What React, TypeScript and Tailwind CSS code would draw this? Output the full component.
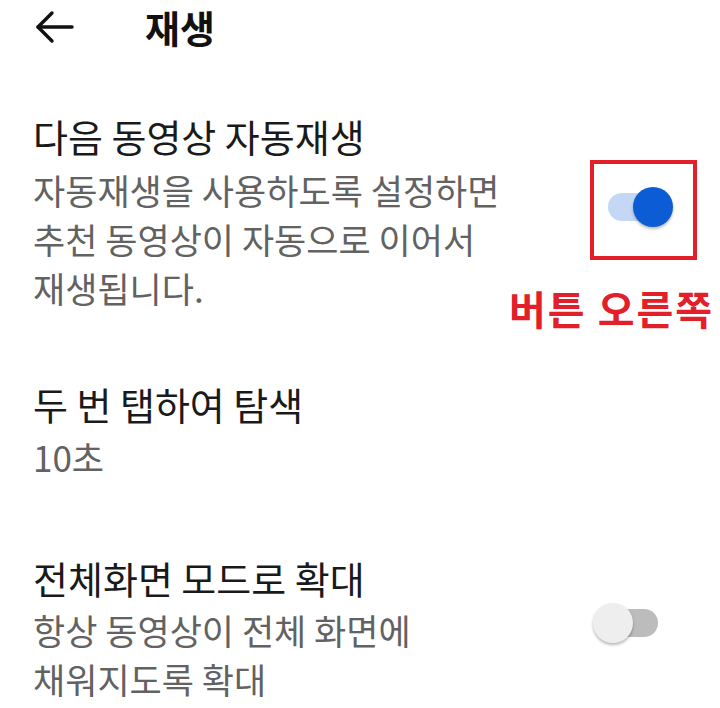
import React from 'react';

const font = { fontFamily: '"Noto Sans CJK KR", "Noto Sans", sans-serif' };

function Toggle({ on }: { on: boolean }) {
  return (
    <div className="relative w-[65px] h-[40px]">
      <div
        className={`absolute top-[6px] h-[28px] w-[55px] rounded-full ${
          on ? 'left-0 bg-[#c4d8f6]' : 'right-0 bg-[#bcbcbc]'
        }`}
      />
      <div
        className={`absolute top-0 h-[40px] w-[40px] rounded-full shadow-[0_2px_3px_rgba(0,0,0,0.28)] ${
          on ? 'right-0 bg-[#0b5cd5]' : 'left-0 bg-[#eeeeee]'
        }`}
      />
    </div>
  );
}

export default function App() {
  return (
    <div className="relative w-[720px] h-[708px] overflow-hidden bg-white" style={font}>
      {/* Header */}
      <div className="flex items-center h-[54px]">
        <svg
          className="ml-[35px]"
          width="40"
          height="34"
          viewBox="0 0 40 34"
          fill="none"
          stroke="#111"
          strokeWidth="3.4"
          strokeLinecap="round"
          strokeLinejoin="round"
        >
          <path d="M3 17H37" />
          <path d="M17 3L3 17L17 31" />
        </svg>
        <span className="ml-[70px] text-[38px] font-bold text-[#111] leading-none">재생</span>
      </div>

      {/* 다음 동영상 자동재생 */}
      <div className="flex items-start justify-between pl-[33px] mt-[58px]">
        <div className="whitespace-nowrap">
          <div className="text-[38px] leading-[48px] text-[#1a1a1a]">다음 동영상 자동재생</div>
          <div className="mt-[5px] text-[35px] leading-[49px] text-[#626262]">
            자동재생을 사용하도록 설정하면
            <br />
            추천 동영상이 자동으로 이어서
            <br />
            재생됩니다.
          </div>
        </div>
        <div className="mt-[75px] mr-[47px]">
          <Toggle on />
        </div>
      </div>

      {/* 두 번 탭하여 탐색 */}
      <div className="pl-[33px] mt-[68px] whitespace-nowrap">
        <div className="text-[38px] leading-[48px] text-[#1a1a1a]">두 번 탭하여 탐색</div>
        <div className="mt-[4px] text-[35px] leading-[49px] text-[#626262]">10초</div>
      </div>

      {/* 전체화면 모드로 확대 */}
      <div className="flex items-start justify-between pl-[33px] mt-[73px]">
        <div className="whitespace-nowrap">
          <div className="text-[38px] leading-[48px] text-[#1a1a1a]">전체화면 모드로 확대</div>
          <div className="mt-[3px] text-[35px] leading-[49px] text-[#626262]">
            항상 동영상이 전체 화면에
            <br />
            채워지도록 확대
          </div>
        </div>
        <div className="mt-[49px] mr-[62px]">
          <Toggle on={false} />
        </div>
      </div>

      {/* annotation */}
      <div className="absolute left-[590px] top-[160px] w-[107px] h-[100px] border-[4px] border-[#e3202a]" />
      <div className="absolute left-[509px] top-[284px] text-[40px] leading-[48px] tracking-[2px] font-bold text-[#e3202a] whitespace-nowrap">
        버튼 오른쪽
      </div>
    </div>
  );
}
